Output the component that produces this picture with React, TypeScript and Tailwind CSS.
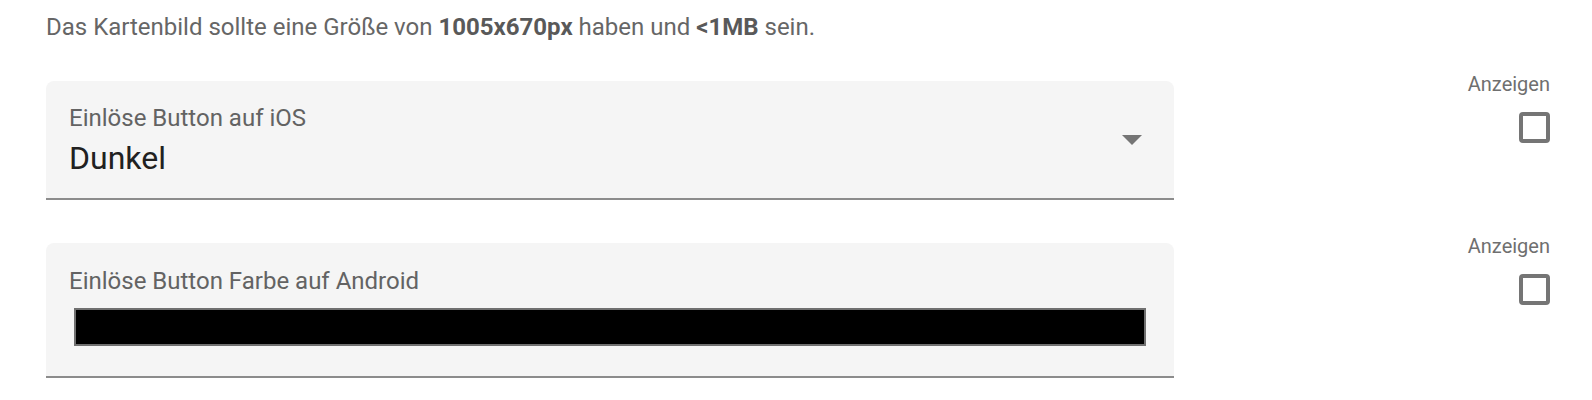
export default function App() {
  const rows = [
    { label: 'Einlöse Button auf iOS', value: 'Dunkel', kind: 'select' as const },
    { label: 'Einlöse Button Farbe auf Android', value: '#000000', kind: 'color' as const },
  ];

  return (
    <div className="w-[1592px] h-[400px] bg-white pl-[46px] pr-[42px] pt-[13px] font-['Roboto',sans-serif] overflow-hidden">
      <p className="text-[24px] leading-[28px] text-[#666666]">
        Das Kartenbild sollte eine Größe von <b className="font-bold text-[#595959]">1005x670px</b> haben und{' '}
        <b className="font-bold text-[#595959]">&lt;1MB</b> sein.
      </p>

      {rows.map((row, i) => (
        <div key={row.label} className={`flex items-start ${i === 0 ? 'mt-[31px]' : 'mt-[34px]'}`}>
          {row.kind === 'select' ? (
            <div className="mt-[9px] flex h-[119px] w-[1128px] items-center rounded-t-[8px] border-b-2 border-[#8c8c8c] bg-[#f5f5f5] pl-[23px] pr-[32px]">
              <div className="flex-1 self-start pt-[23px]">
                <div className="text-[24px] leading-[28px] text-[#636363]">{row.label}</div>
                <div className="mt-[7px] text-[32px] leading-[38px] text-[#212121]">{row.value}</div>
              </div>
              <svg width="20" height="10" viewBox="0 0 20 10" className="shrink-0">
                <polygon points="0,0 20,0 10,10" fill="#757575" />
              </svg>
            </div>
          ) : (
            <div className="mt-[9px] h-[135px] w-[1128px] rounded-t-[8px] border-b-2 border-[#8c8c8c] bg-[#f5f5f5] pl-[23px] pr-[28px] pt-[24px]">
              <div className="text-[24px] leading-[28px] text-[#636363]">{row.label}</div>
              <div className="ml-[5px] mt-[13px] h-[38px] border-2 border-[#707070] bg-black" />
            </div>
          )}
          <div className="flex flex-1 flex-col items-end">
            <span className="text-[20px] leading-[24px] text-[#6f6f6f]">Anzeigen</span>
            <div className="mt-[16px] h-[31px] w-[31px] rounded-[4px] border-4 border-[#757575]" />
          </div>
        </div>
      ))}
    </div>
  );
}
